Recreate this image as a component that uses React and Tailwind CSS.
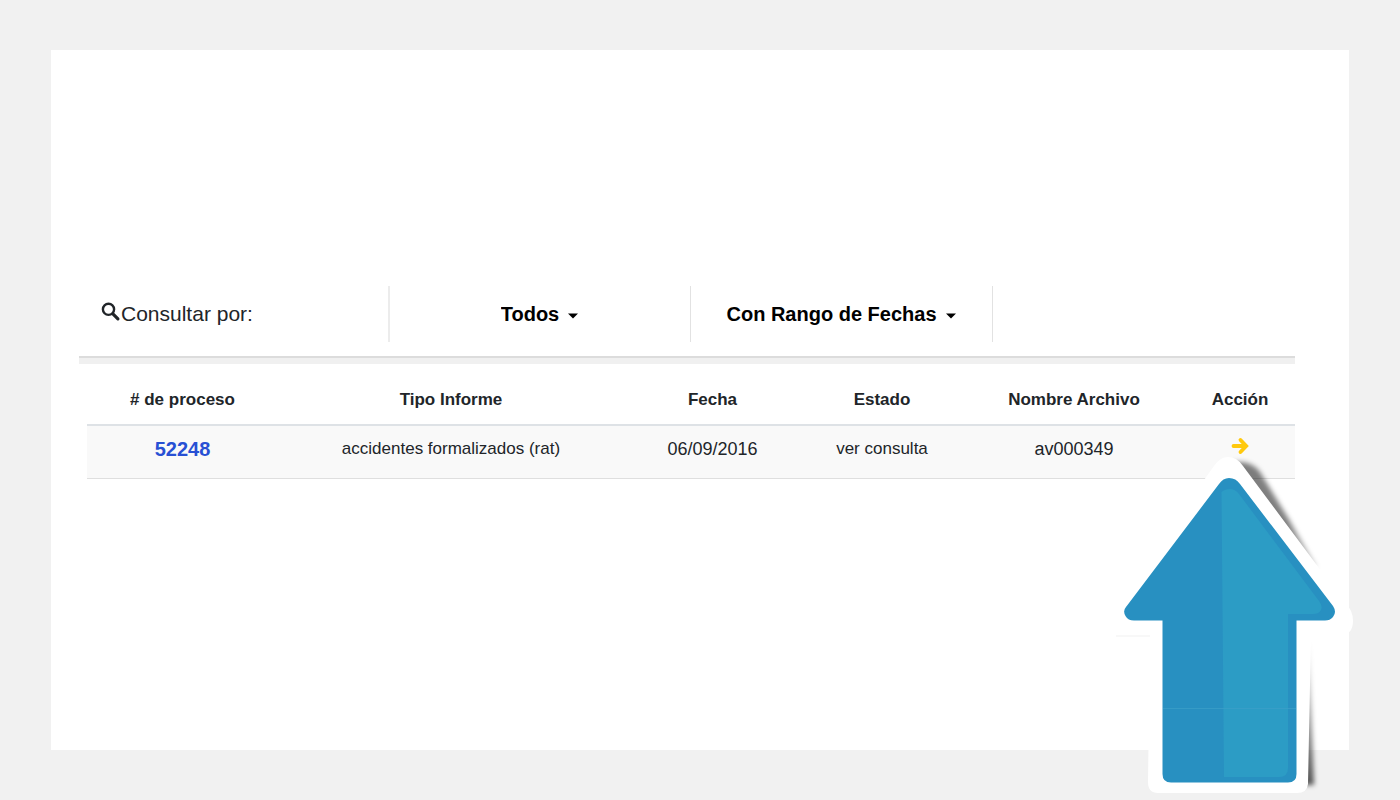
import React from "react";

const columns = [
  { label: "# de proceso", width: "w-[191px]" },
  { label: "Tipo Informe", width: "w-[346px]" },
  { label: "Fecha", width: "w-[177px]" },
  { label: "Estado", width: "w-[162px]" },
  { label: "Nombre Archivo", width: "w-[222px]" },
  { label: "Acción", width: "w-[110px]" },
];

function SearchIcon() {
  return (
    <svg aria-hidden="true" viewBox="0 0 20 20" className="mb-1 size-5 shrink-0 text-[#212529]">
      <circle cx="7.5" cy="7.300" r="5.600" fill="none" stroke="currentColor" strokeWidth="2.4" />
      <path d="M11.900 11.800l5 5" stroke="currentColor" strokeWidth="3.200" strokeLinecap="round" />
    </svg>
  );
}

function FilterSelect({ label }) {
  return (
    <div className="flex items-center justify-center border-r border-[#e2e2e2]">
      <div className="relative flex items-center">
        <select
          aria-label={label}
          className="[field-sizing:content] appearance-none bg-transparent pr-5 text-xl font-bold text-black"
        >
          <option>{label}</option>
        </select>
        <svg
          aria-hidden="true"
          viewBox="0 0 12 6"
          className="pointer-events-none absolute right-0 mt-1 h-[6px] w-3"
        >
          <path d="M1 0.500h10l-5 5z" fill="#000" />
        </svg>
      </div>
    </div>
  );
}

function PointerArrow() {
  return (
    <svg
      aria-hidden="true"
      viewBox="1110 450 250 350"
      className="pointer-events-none absolute top-[400px] -right-[11px] h-[350px] w-[250px]"
    >
      <defs>
        <filter id="soft" x="-30%" y="-20%" width="160%" height="140%">
          <feGaussianBlur stdDeviation="2.8" />
        </filter>
        <linearGradient id="edge" gradientUnits="userSpaceOnUse" x1="1240" y1="460" x2="1316" y2="565">
          <stop offset="0" stopColor="#000" stopOpacity="0.5" />
          <stop offset="0.6" stopColor="#000" stopOpacity="0.5" />
          <stop offset="1" stopColor="#000" stopOpacity="0.25" />
        </linearGradient>
        <linearGradient id="side" x1="0" y1="0" x2="0" y2="1">
          <stop offset="0" stopColor="#000" stopOpacity="0" />
          <stop offset="0.5" stopColor="#000" stopOpacity="0.35" />
          <stop offset="1" stopColor="#000" stopOpacity="0.65" />
        </linearGradient>
      </defs>
      <path d="M1230 463Q1250 459 1260 472L1288 518L1317 568L1290 556Z" fill="url(#edge)" filter="url(#soft)" />
      <path d="M1296 640H1309L1314 785H1296Z" fill="url(#side)" filter="url(#soft)" />
      <path d="M1116 636H1150" stroke="#f8f8f8" strokeWidth="2" />
      <path
        d="M1228 457Q1237 457 1243 466L1345 603Q1353 610 1353 621Q1353 635 1340 635H1311L1308 784Q1307 793 1297 793H1158Q1148 793 1148 782L1150 635H1126Q1112 634 1112 618Q1112 608 1119 600L1214 466Q1220 457 1228 457Z"
        fill="#fff"
      />
      <path
        d="M1229 478Q1236 478 1240 484L1333 606Q1337 612 1333 617Q1330 620.500 1325 620.500H1296.500V774Q1296.500 782.500 1288 782.500H1171Q1162.500 782.500 1162.500 774V620.500H1134Q1128 620.500 1125.500 616Q1122.500 611 1126 607L1219 484Q1223 478 1229 478Z"
        fill="#2890c1"
      />
      <path
        d="M1221.500 492Q1225 489 1230 489Q1235 489 1239 494L1319 601Q1323 606 1321 610Q1319 614 1313 614H1288V768Q1288 777 1279 777H1224Z"
        fill="#2c9cc5"
      />
      <path d="M1163 708.500H1296" stroke="#3ca0c9" strokeWidth="1" opacity="0.7" />
    </svg>
  );
}

export default function App() {
  return (
    <div className="flex min-h-screen bg-[#f1f1f1] px-[51px] py-[50px] font-['Liberation_Sans',Arial,sans-serif] text-[#212529]">
      <main className="relative flex-1 bg-white pt-[236px] pr-[54px] pb-12 pl-7">
        <div className="grid h-14 grid-cols-[311px_301px_302px_1fr]">
          <div className="flex items-center border-r-2 border-[#ececec] pl-[22px] text-[21px]">
            <SearchIcon />
            <span>Consultar por:</span>
          </div>
          <FilterSelect label="Todos" />
          <FilterSelect label="Con Rango de Fechas" />
        </div>
        <div className="mt-[14px] h-2 border-t-2 border-[#dcdcdc] bg-[#f0f0f0]" />
        <div className="pt-3 pl-2">
          <table className="w-full table-fixed border-collapse text-center">
            <thead>
              <tr className="h-[49px] border-b-2 border-[#dee2e6]">
                {columns.map((c) => (
                  <th key={c.label} scope="col" className={`${c.width} whitespace-nowrap text-[17px] font-bold`}>
                    {c.label}
                  </th>
                ))}
              </tr>
            </thead>
            <tbody>
              <tr className="h-[53px] border-b border-[#dfdfdf] bg-[#f9f9f9] align-top text-[17px] leading-6 whitespace-nowrap">
                <td className="pt-[11px]">
                  <a href="#52248" className="text-xl leading-6 font-bold text-[#2850d4]">52248</a>
                </td>
                <td className="pt-[11px]">accidentes formalizados (rat)</td>
                <td className="pt-[11px] text-lg leading-6">06/09/2016</td>
                <td className="pt-[11px]">ver consulta</td>
                <td className="pt-[11px] text-lg leading-6">av000349</td>
                <td className="pt-[11px]">
                  <button type="button" aria-label="Abrir" className="align-top">
                    <svg aria-hidden="true" viewBox="0 0 18 18" className="size-[18px]">
                      <path
                        d="M2.500 9H14M9.500 3L15.200 9L9.500 15"
                        fill="none"
                        stroke="#ffc90e"
                        strokeWidth="3.800"
                        strokeLinecap="round"
                        strokeLinejoin="miter"
                      />
                    </svg>
                  </button>
                </td>
              </tr>
            </tbody>
          </table>
        </div>
        <PointerArrow />
      </main>
    </div>
  );
}
